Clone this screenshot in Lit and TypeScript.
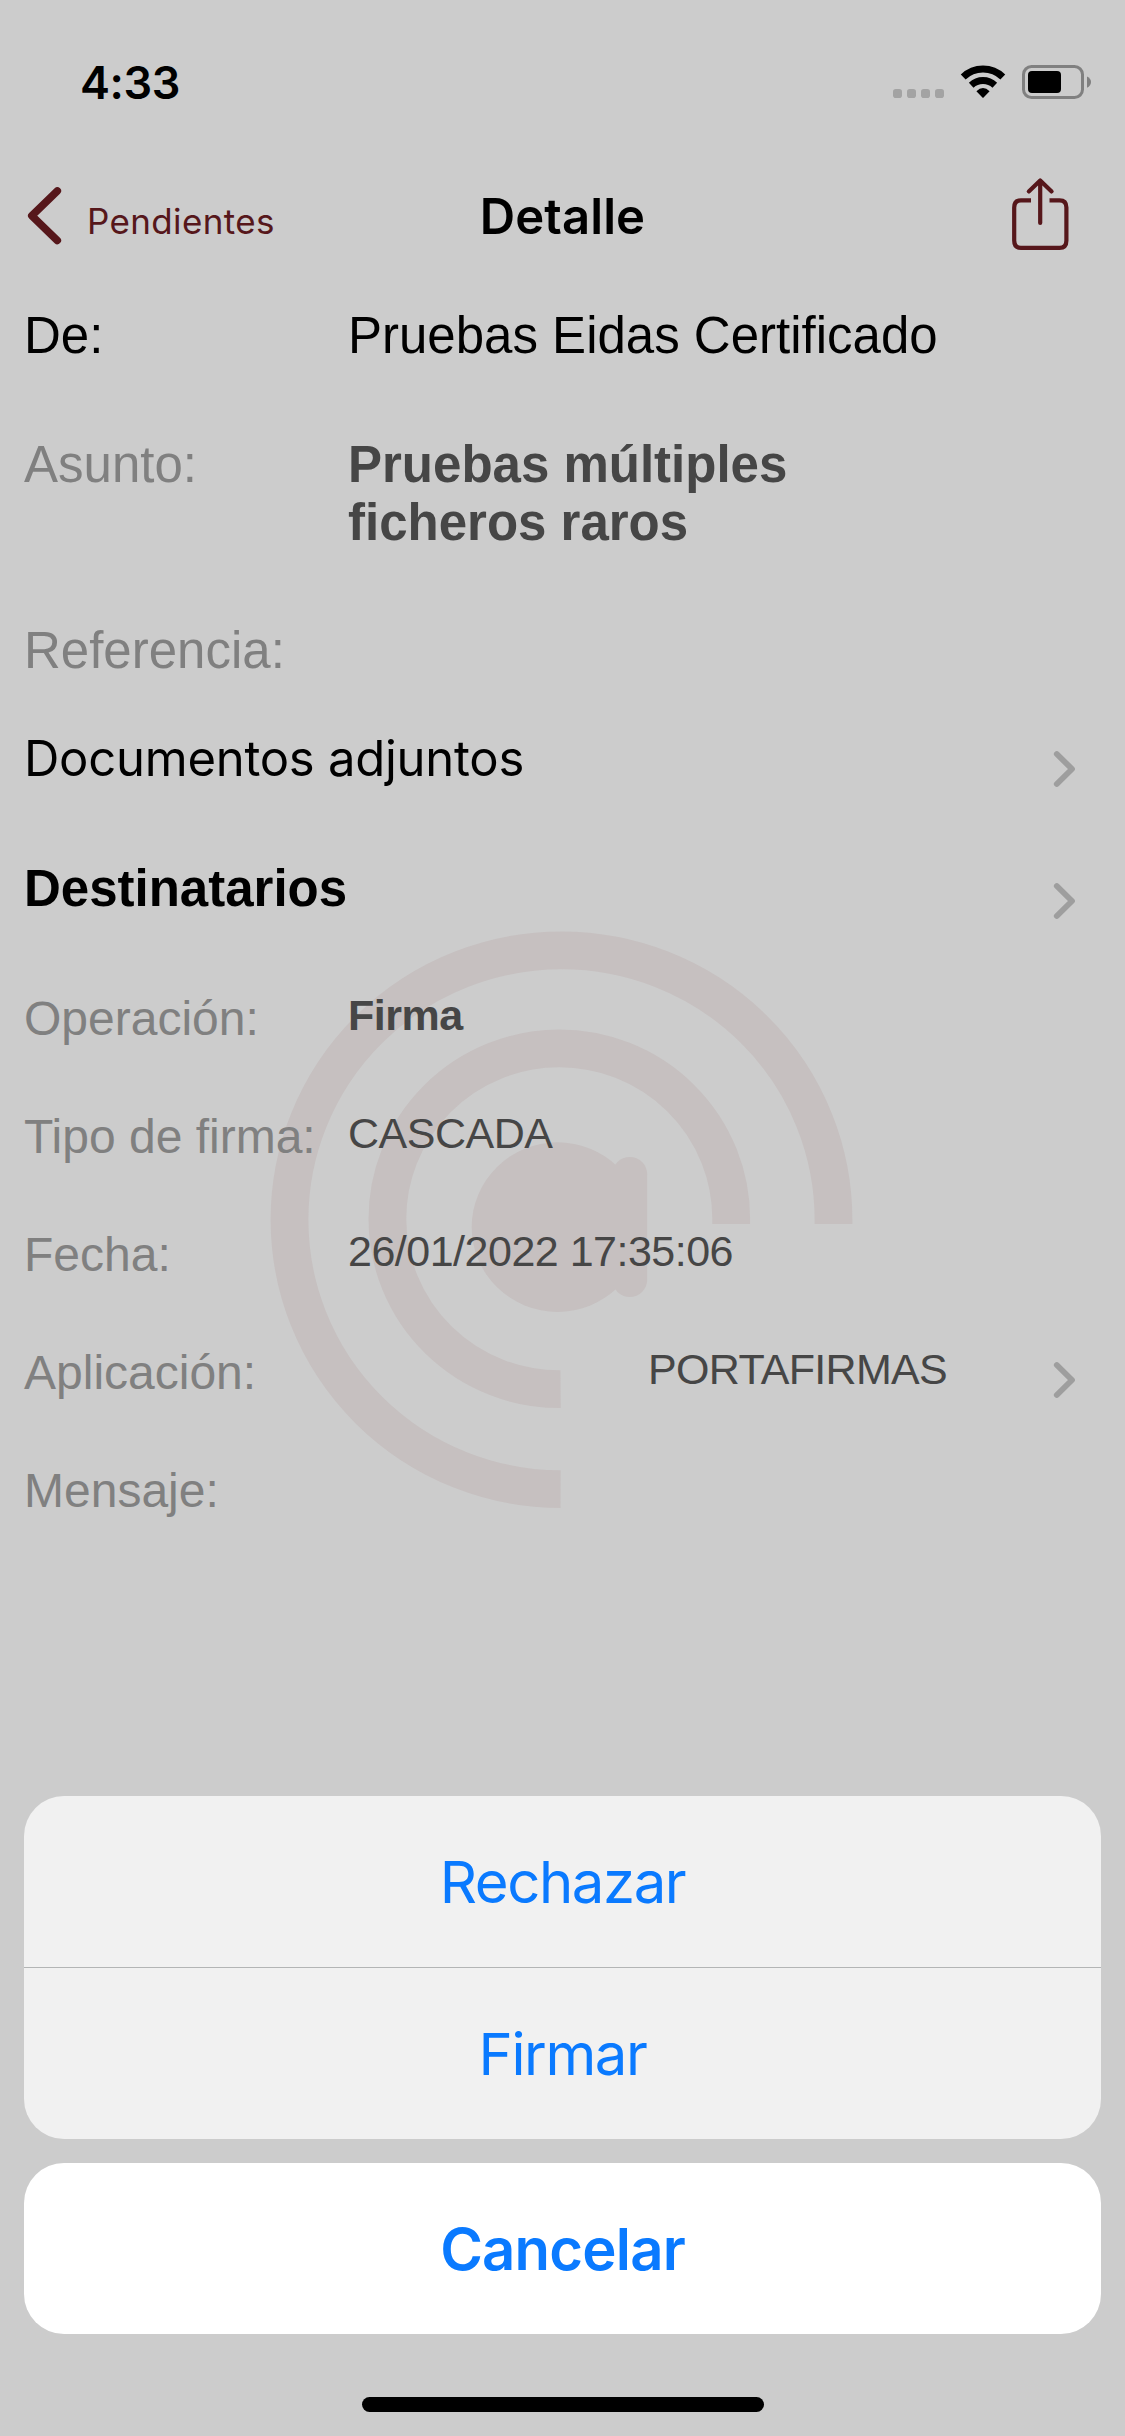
import { LitElement, html, css, svg, nothing } from "lit";
import { customElement, property } from "lit/decorators.js";
import { classMap } from "lit/directives/class-map.js";

interface DetailRow {
  label: string;
  value?: string;
  kind: string;
  link?: boolean;
}

const ROWS: DetailRow[] = [
  { label: "De:", value: "Pruebas Eidas Certificado", kind: "from" },
  { label: "Asunto:", value: "Pruebas múltiples ficheros raros", kind: "subject" },
  { label: "Referencia:", kind: "reference" },
  { label: "Documentos adjuntos", kind: "attachments", link: true },
  { label: "Destinatarios", kind: "recipients", link: true },
  { label: "Operación:", value: "Firma", kind: "operation" },
  { label: "Tipo de firma:", value: "CASCADA", kind: "meta" },
  { label: "Fecha:", value: "26/01/2022 17:35:06", kind: "meta" },
  { label: "Aplicación:", value: "PORTAFIRMAS", kind: "application", link: true },
  { label: "Mensaje:", kind: "meta" },
];

@customElement("status-bar")
class StatusBar extends LitElement {
  static styles = css`
    :host {
      display: flex;
      justify-content: space-between;
      height: 160px;
      box-sizing: border-box;
      padding: 54px 33px 0 80px;
    }
    .time {
      font: 600 45px/57px Inter, sans-serif;
      letter-spacing: -0.4px;
      color: #000;
    }
    .icons {
      display: block;
      margin-top: 10px;
    }
  `;
  render() {
    return html`
      <span class="time">4:33</span>
      <svg class="icons" width="199" height="36" viewBox="893 64 199 36">
        ${[893, 907, 921, 935].map(
          (x) => svg`<rect x=${x} y="89" width="9" height="9" rx="2.8" fill="#a3a3a3" />`
        )}
        <g fill="none" stroke="#000">
          <path d="M963.2 76.9 A28.5 28.5 0 0 1 1002.8 76.9" stroke-width="7" />
          <path d="M971.2 85.2 A17.2 17.2 0 0 1 994.8 85.2" stroke-width="6.8" />
        </g>
        <path d="M976.4 91.2 Q983 84.8 989.6 91.2 L983.8 97.2 Q983 98.2 982.2 97.2 Z" fill="#000" />
        <rect x="1023.5" y="66.5" width="59" height="31" rx="8" fill="none" stroke="#808080" stroke-width="3" />
        <rect x="1028" y="71" width="33" height="22" rx="4" fill="#000" />
        <path d="M1087 76.5 Q1091 78.5 1091 82 Q1091 85.8 1087 87.8 Z" fill="#808080" />
      </svg>
    `;
  }
}

@customElement("nav-bar")
class NavBar extends LitElement {
  static styles = css`
    :host {
      display: grid;
      grid-template-columns: 1fr auto 1fr;
      height: 146px;
      box-sizing: border-box;
      padding: 14px 26px 0 26px;
      font-family: Inter, sans-serif;
    }
    .back {
      display: flex;
      color: #56171b;
    }
    .arrow {
      display: block;
      margin-top: 11px;
    }
    .back-text {
      margin: 19px 0 0 23px;
      font-size: 35px;
      line-height: 56px;
      letter-spacing: 0.35px;
    }
    .title {
      margin-top: 12px;
      font-size: 49px;
      line-height: 61px;
      font-weight: 600;
      letter-spacing: 0.1px;
      color: #000;
    }
    .share {
      display: block;
      justify-self: end;
      margin: 2px 28px 0 0;
    }
  `;
  render() {
    return html`
      <div class="back">
        <svg class="arrow" width="38" height="62" viewBox="26 185 38 62">
          <path d="M57.3 191 L31.8 215.7 L57.3 240.4" fill="none" stroke="#56171b" stroke-width="7.6" stroke-linecap="round" stroke-linejoin="round" />
        </svg>
        <span class="back-text">Pendientes</span>
      </div>
      <span class="title">Detalle</span>
      <svg class="share" width="62" height="76" viewBox="1009 176 62 76">
        <g fill="none" stroke="#56171b" stroke-width="4.2">
          <path d="M1031 200.3 H1021 Q1014.2 200.3 1014.2 207.5 V240.5 Q1014.2 247.9 1021 247.9 H1059.5 Q1066.4 247.9 1066.4 240.5 V207.5 Q1066.4 200.3 1059.5 200.3 H1049.5" />
          <path d="M1040.2 180.5 V223 M1028.8 191.4 L1040.2 180.4 L1051.6 191.4" stroke-linecap="round" stroke-linejoin="round" />
        </g>
      </svg>
    `;
  }
}

@customElement("detail-row")
class DetailRowElement extends LitElement {
  @property({ attribute: false }) row!: DetailRow;
  static styles = css`
    :host {
      display: block;
      font-family: "Liberation Sans", Helvetica, Arial, sans-serif;
    }
    .row {
      display: flex;
      align-items: flex-start;
      height: 118px;
      padding: 0 49px 0 24px;
    }
    .label {
      flex: 0 0 324px;
      font-size: 48px;
      line-height: 60px;
      color: #808080;
      white-space: nowrap;
    }
    .value {
      flex: 1;
      font-size: 43px;
      line-height: 52px;
      letter-spacing: -0.5px;
      color: #464646;
    }
    .chevron {
      flex: none;
      display: block;
      margin: 18px 0 0 auto;
    }
    .from { height: 129px; }
    .from .label, .from .value { font-size: 51px; line-height: 60px; color: #000; letter-spacing: 0; }
    .subject { height: 186px; }
    .subject .label { font-size: 51px; line-height: 59px; }
    .subject .value { margin-top: 1px; font-size: 51px; line-height: 58px; font-weight: 700; letter-spacing: 0; flex: 0 0 500px; }
    .reference { height: 108px; }
    .reference .label { font-size: 51px; }
    .attachments { height: 130px; }
    .attachments .label { font-family: Inter, sans-serif; font-size: 49px; letter-spacing: -0.25px; color: #000; }
    .attachments .chevron { margin-top: 21px; }
    .recipients { height: 130px; }
    .recipients .label { font-size: 51px; font-weight: 700; color: #000; }
    .recipients .chevron { margin-top: 23px; }
    .operation .value { font-weight: 700; }
    .application .value { text-align: right; padding-right: 105px; letter-spacing: -0.7px; }
  `;
  render() {
    const { label, value, kind, link } = this.row;
    return html`
      <div class=${classMap({ row: true, [kind]: true })}>
        <span class="label">${label}</span>
        ${value ? html`<span class="value">${value}</span>` : nothing}
        ${link
          ? html`<svg class="chevron" width="24" height="38" viewBox="0 0 24 38">
              <path d="M4.8 4 L20 19 L4.8 34" fill="none" stroke="#9e9e9e" stroke-width="5.8" stroke-linecap="round" stroke-linejoin="round" />
            </svg>`
          : nothing}
      </div>
    `;
  }
}

@customElement("action-sheet")
class ActionSheet extends LitElement {
  static styles = css`
    :host {
      display: flex;
      flex-direction: column;
      gap: 24px;
      font: 400 58px/172px Inter, sans-serif;
      text-align: center;
      color: #0a7aff;
    }
    .group {
      border-radius: 40px;
      background: #f1f1f1;
      overflow: hidden;
    }
    .action { height: 171px; letter-spacing: -1.4px; }
    .action + .action { border-top: 1px solid #b3b5b5; }
    .cancel {
      height: 171px;
      border-radius: 40px;
      background: #fff;
      font-weight: 600;
      letter-spacing: -0.8px;
    }
  `;
  render() {
    return html`
      <div class="group">
        <div class="action">Rechazar</div>
        <div class="action">Firmar</div>
      </div>
      <div class="cancel">Cancelar</div>
    `;
  }
}

@customElement("app-root")
class AppRoot extends LitElement {
  static styles = css`
    :host { display: block; }
    .screen {
      position: relative;
      width: 1125px;
      height: 2436px;
      overflow: hidden;
      background: #ccc;
    }
    .watermark {
      position: absolute;
      left: 268px;
      top: 929px;
    }
    .content { position: relative; }
    .sheet {
      position: absolute;
      left: 24px;
      right: 24px;
      bottom: 102px;
    }
    .home {
      position: absolute;
      left: 362px;
      bottom: 24px;
      width: 402px;
      height: 15px;
      border-radius: 8px;
      background: #000;
    }
  `;
  render() {
    return html`
      <div class="screen">
        <svg class="watermark" width="588" height="582" viewBox="268 929 588 582">
          <g fill="none" stroke="#c6c0c0" stroke-width="37.8">
            <path d="M560.6 1489.2 A272 269.4 0 1 1 833.5 1219.8 V1224" />
            <path d="M560.6 1389.2 A171.9 170.4 0 1 1 731.2 1218.7 V1224" />
          </g>
          <g fill="#c6c0c0">
            <ellipse cx="557.5" cy="1227.1" rx="85.8" ry="84.8" />
            <rect x="612.4" y="1157" width="34.8" height="140" rx="17.4" />
          </g>
        </svg>
        <div class="content">
          <status-bar></status-bar>
          <nav-bar></nav-bar>
          ${ROWS.map((row) => html`<detail-row .row=${row}></detail-row>`)}
        </div>
        <action-sheet class="sheet"></action-sheet>
        <div class="home"></div>
      </div>
    `;
  }
}
